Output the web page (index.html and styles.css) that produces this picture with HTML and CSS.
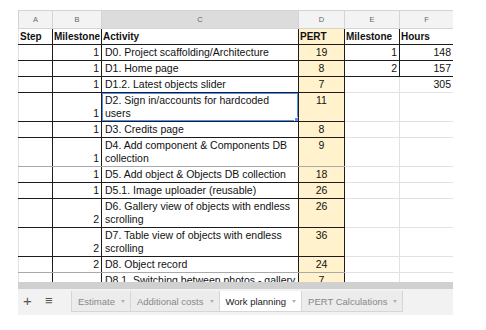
FILE: index.html
```html
<!DOCTYPE html>
<html lang="en">
<head>
  <meta charset="UTF-8">
  <title>Work planning</title>
  <link rel="stylesheet" href="styles.css">
</head>
<body>
  <div class="sheet">
    <!-- Grid -->
    <div class="grid">
      <table>
        <colgroup>
          <col class="col-a"><col class="col-b"><col class="col-c"><col class="col-d"><col class="col-e"><col class="col-f">
        </colgroup>
        <tr class="letters">
          <th>A</th><th>B</th><th class="active">C</th><th>D</th><th>E</th><th>F</th>
        </tr>
        <tr>
          <td class="k first head">Step</td>
          <td class="k head">Milestone</td>
          <td class="k head">Activity</td>
          <td class="k pert head">PERT</td>
          <td class="k head">Milestone</td>
          <td class="k head">Hours</td>
        </tr>
        <tr>
          <td class="k first"></td>
          <td class="k num">1</td>
          <td class="k">D0. Project scaffolding/Architecture</td>
          <td class="k pert">19</td>
          <td class="k num">1</td>
          <td class="k num">148</td>
        </tr>
        <tr>
          <td class="k first"></td>
          <td class="k num">1</td>
          <td class="k">D1. Home page</td>
          <td class="k pert">8</td>
          <td class="k num">2</td>
          <td class="k num">157</td>
        </tr>
        <tr>
          <td class="k first"></td>
          <td class="k num">1</td>
          <td class="k">D1.2. Latest objects slider</td>
          <td class="k pert">7</td>
          <td></td>
          <td class="num">305</td>
        </tr>
        <tr>
          <td class="k first"></td>
          <td class="k num">1</td>
          <td class="k selected">D2. Sign in/accounts for hardcoded users<span class="handle"></span></td>
          <td class="k pert">11</td>
          <td></td><td></td>
        </tr>
        <tr>
          <td class="k first"></td>
          <td class="k num">1</td>
          <td class="k">D3. Credits page</td>
          <td class="k pert">8</td>
          <td></td><td></td>
        </tr>
        <tr class="soft">
          <td class="k first"></td>
          <td class="k num">1</td>
          <td class="k">D4. Add component &amp; Components DB collection</td>
          <td class="k pert">9</td>
          <td></td><td></td>
        </tr>
        <tr>
          <td class="k first"></td>
          <td class="k num">1</td>
          <td class="k">D5. Add object &amp; Objects DB collection</td>
          <td class="k pert">18</td>
          <td></td><td></td>
        </tr>
        <tr>
          <td class="k first"></td>
          <td class="k num">1</td>
          <td class="k">D5.1. Image uploader (reusable)</td>
          <td class="k pert">26</td>
          <td></td><td></td>
        </tr>
        <tr>
          <td class="k first"></td>
          <td class="k num">2</td>
          <td class="k">D6. Gallery view of objects with endless scrolling</td>
          <td class="k pert">26</td>
          <td></td><td></td>
        </tr>
        <tr>
          <td class="k first"></td>
          <td class="k num">2</td>
          <td class="k">D7. Table view of objects with endless scrolling</td>
          <td class="k pert">36</td>
          <td></td><td></td>
        </tr>
        <tr class="soft">
          <td class="k first"></td>
          <td class="k num">2</td>
          <td class="k">D8. Object record</td>
          <td class="k pert">24</td>
          <td></td><td></td>
        </tr>
        <!-- last row is cut by the scrollbar -->
        <tr class="cut">
          <td class="k first"></td>
          <td class="k"></td>
          <td class="k">D8.1. Switching between photos - gallery</td>
          <td class="k pert">7</td>
          <td></td><td></td>
        </tr>
      </table>
    </div>
    <div class="scrollbar"></div>

    <!-- Sheet tabs -->
    <div class="tabbar">
      <span class="tool plus">+</span>
      <span class="tool menu">&#8801;</span>
      <div class="tab">Estimate<i class="caret"></i></div>
      <div class="tab">Additional costs<i class="caret"></i></div>
      <div class="tab current">Work planning<i class="caret"></i></div>
      <div class="tab">PERT Calculations<i class="caret"></i></div>
    </div>
  </div>
</body>
</html>
```
FILE: styles.css
```css
body {
  margin: 0;
  background: #fff;
  font-family: "Liberation Sans", Arial, sans-serif;
  color: #111;
}

.sheet {
  width: 435px;
  margin: 10px 0 0 18px;
}

.grid {
  height: 272px;
  overflow: hidden;
}

table {
  border-collapse: collapse;
  table-layout: fixed;
  width: 435px;
  font-size: 10.5px;
}

.col-a { width: 34px; }
.col-b { width: 49px; }
.col-c { width: 197px; }
.col-d { width: 46px; }
.col-e { width: 55px; }
.col-f { width: 54px; }

th, td {
  border: 1px solid #e2e2e2;
}

.letters th {
  height: 17px;
  padding: 0;
  background: #f3f3f3;
  border-color: #d4d4d4;
  color: #666;
  font-weight: normal;
  font-size: 7.5px;
  text-align: center;
}

.letters th.active {
  background: #dcdcdc;
}

td {
  padding: 1px 1px 1px 3px;
  line-height: 13px;
  vertical-align: top;
  text-align: left;
  white-space: normal;
  overflow: hidden;
}

td.k {
  border: 1px solid #1c1c1c;
}

td.first {
  border-left-color: #e2e2e2;
}

tr.soft td.k {
  border-bottom-color: #a9a9a9;
}

tr.cut td {
  white-space: nowrap;
}

td.head {
  font-weight: bold;
  font-size: 10px;
  padding-left: 1px;
  padding-right: 0;
  white-space: nowrap;
}

td.num {
  text-align: right;
  vertical-align: bottom;
  padding-right: 2px;
}

td.pert {
  background: #fff2cc;
  text-align: center;
  padding-right: 3px;
}

td.pert.head {
  text-align: left;
}

td.selected {
  position: relative;
  box-shadow: inset 0 0 0 1px #4d90fe;
}

.handle {
  position: absolute;
  right: -3px;
  bottom: -3px;
  width: 5px;
  height: 5px;
  background: #4d90fe;
  border: 1px solid #fff;
}

.scrollbar {
  height: 7px;
  background: #d0d0d0;
}

.tabbar {
  display: flex;
  align-items: flex-start;
  height: 26px;
  background: #f2f2f2;
  font-size: 9.5px;
}

.tool {
  color: #555;
  line-height: 24px;
}

.plus {
  margin-left: 5px;
  font-size: 15px;
  width: 22px;
}

.menu {
  font-size: 13px;
  width: 26px;
}

.tab {
  display: flex;
  align-items: center;
  margin-top: 2px;
  height: 20px;
  padding: 0 5px 0 6px;
  background: #ececec;
  border: 1px solid #d6d6d6;
  border-top: none;
  margin-right: -1px;
  color: #888;
  white-space: nowrap;
}

.tab.current {
  background: #fff;
  color: #222;
}

.caret {
  margin-left: 6px;
  border-left: 2.5px solid transparent;
  border-right: 2.5px solid transparent;
  border-top: 3px solid #b0b0b0;
}
```
